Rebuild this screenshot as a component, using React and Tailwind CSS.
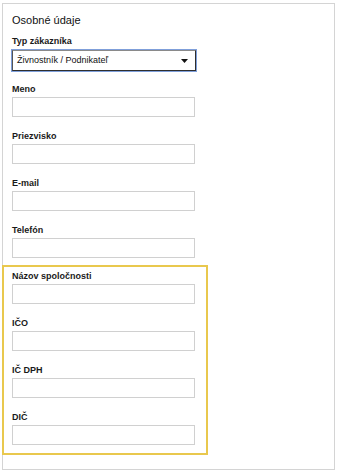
import React from "react";

const font = { fontFamily: '"Liberation Sans", Arial, sans-serif' };

function Field({ label }) {
  return (
    <div className="flex flex-col">
      <div className="text-[9px] leading-[11px] font-bold text-[#1a1a1a] mb-[2px]">{label}</div>
      <div className="w-[183px] h-[20px] border border-[#d0d0d0] bg-white" />
    </div>
  );
}

export default function App() {
  return (
    <div className="w-[337px] h-[472px] bg-white pt-[3px] pl-[2px]" style={font}>
      <div className="w-[333px] h-[467px] border border-[#d4d4d4] pl-[9px] pt-[10px] flex flex-col">
        <div className="text-[11px] leading-[13px] text-[#111]">Osobné údaje</div>
        <div className="mt-[9px] flex flex-col">
          <div className="text-[9px] leading-[11px] font-bold text-[#1a1a1a] mb-[2px]">Typ zákazníka</div>
          <div className="-ml-[1px] w-[186px] h-[23px] border border-[#7f9fda] bg-white">
            <div className="w-full h-full border border-[#2e2e2e] border-t-[#8a8a8a] border-l-[#555] flex items-center justify-between pl-[4px] pr-[7px]">
              <span className="text-[9px] leading-[11px] text-[#111]">Živnostník / Podnikateľ</span>
              <svg width="7" height="4" viewBox="0 0 7 4" className="mt-[1px]">
                <polygon points="0,0 7,0 3.5,4" fill="#111" />
              </svg>
            </div>
          </div>
        </div>
        <div className="mt-[12px] flex flex-col gap-[14px]">
          <Field label="Meno" />
          <Field label="Priezvisko" />
          <Field label="E-mail" />
          <Field label="Telefón" />
        </div>
        <div className="mt-[7px] -ml-[10px] w-[206px] border-2 border-[#e9c84e] pl-[8px] pt-[4px] pb-[8px] flex flex-col gap-[14px]">
          <Field label="Názov spoločnosti" />
          <Field label="IČO" />
          <Field label="IČ DPH" />
          <Field label="DIČ" />
        </div>
      </div>
    </div>
  );
}
